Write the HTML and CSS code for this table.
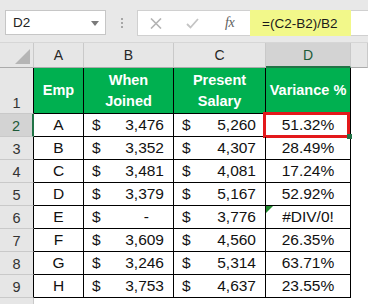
FILE: index.html
```html
<!DOCTYPE html>
<html>
<head>
<meta charset="utf-8">
<link rel="stylesheet" href="styles.css">
</head>
<body>
<div class="app">
  <div class="fbar">
    <div class="namebox">
      <span class="ref">D2</span>
      <svg class="caret" width="8" height="5" viewBox="0 0 8 5"><path d="M0 0H8L4 5Z" fill="#7a7a7a"/></svg>
    </div>
    <div class="dots"><i></i><i></i><i></i></div>
    <div class="formula">
      <svg class="icon" width="12" height="11" viewBox="0 0 12 11"><path d="M1 0.5L11 10.5M11 0.5L1 10.5" stroke="#b3b3b3" stroke-width="1.6" fill="none"/></svg>
      <svg class="icon check" width="13" height="11" viewBox="0 0 13 11"><path d="M1 6L4.5 9.5L12 1" stroke="#c4c4c4" stroke-width="1.8" fill="none"/></svg>
      <span class="fx">fx</span>
      <div class="ftext">=(C2-B2)/B2</div>
    </div>
  </div>
  <div class="sheet">
    <div class="ch corner"><span class="tri"></span></div>
    <div class="ch">A</div>
    <div class="ch">B</div>
    <div class="ch">C</div>
    <div class="ch sel">D</div>
    <div class="ch"></div>

    <div class="rh">1</div>
    <div class="hd">Emp</div>
    <div class="hd">When<br>Joined</div>
    <div class="hd">Present<br>Salary</div>
    <div class="hd">Variance %</div>
    <div class="blank"></div>

    <div class="rh rsel">2</div>
    <div class="c ctr">A</div>
    <div class="c money"><span>$</span><span>3,476</span></div>
    <div class="c money"><span>$</span><span>5,260</span></div>
    <div class="c ctr active">51.32%<span class="handle"></span></div>
    <div class="blank"></div>

    <div class="rh">3</div>
    <div class="c ctr">B</div>
    <div class="c money"><span>$</span><span>3,352</span></div>
    <div class="c money"><span>$</span><span>4,307</span></div>
    <div class="c ctr">28.49%</div>
    <div class="blank"></div>

    <div class="rh">4</div>
    <div class="c ctr">C</div>
    <div class="c money"><span>$</span><span>3,481</span></div>
    <div class="c money"><span>$</span><span>4,081</span></div>
    <div class="c ctr">17.24%</div>
    <div class="blank"></div>

    <div class="rh">5</div>
    <div class="c ctr">D</div>
    <div class="c money"><span>$</span><span>3,379</span></div>
    <div class="c money"><span>$</span><span>5,167</span></div>
    <div class="c ctr">52.92%</div>
    <div class="blank"></div>

    <div class="rh">6</div>
    <div class="c ctr">E</div>
    <div class="c money"><span>$</span><span class="dash">-</span></div>
    <div class="c money"><span>$</span><span>3,776</span></div>
    <div class="c ctr err">#DIV/0!</div>
    <div class="blank"></div>

    <div class="rh">7</div>
    <div class="c ctr">F</div>
    <div class="c money"><span>$</span><span>3,609</span></div>
    <div class="c money"><span>$</span><span>4,560</span></div>
    <div class="c ctr">26.35%</div>
    <div class="blank"></div>

    <div class="rh">8</div>
    <div class="c ctr">G</div>
    <div class="c money"><span>$</span><span>3,246</span></div>
    <div class="c money"><span>$</span><span>5,314</span></div>
    <div class="c ctr">63.71%</div>
    <div class="blank"></div>

    <div class="rh">9</div>
    <div class="c ctr">H</div>
    <div class="c money"><span>$</span><span>3,753</span></div>
    <div class="c money"><span>$</span><span>4,637</span></div>
    <div class="c ctr">23.55%</div>
    <div class="blank"></div>

    <div class="rh last">10</div>
    <div class="blank"></div>
    <div class="blank"></div>
    <div class="blank"></div>
    <div class="blank"></div>
    <div class="blank"></div>
  </div>
</div>
</body>
</html>
```
FILE: styles.css
```css
* { box-sizing: border-box; }
html, body { margin: 0; padding: 0; }
body {
  width: 368px;
  height: 304px;
  overflow: hidden;
  background: #ffffff;
  font-family: "Liberation Sans", Arial, sans-serif;
}
.app { width: 368px; height: 304px; overflow: hidden; }

.fbar {
  height: 43px;
  background: #e8e8e8;
  border-bottom: 1px solid #d6d6d6;
  display: flex;
  align-items: flex-start;
  padding-top: 10px;
  padding-left: 5px;
}
.namebox {
  width: 101px;
  height: 25px;
  background: #fff;
  border: 1px solid #c6c6c6;
  display: flex;
  align-items: center;
  justify-content: space-between;
  padding: 0 6px 0 7px;
}
.ref { font-size: 13.5px; color: #222; }
.caret { margin-top: 1px; }
.dots {
  width: 31px;
  height: 25px;
  display: flex;
  flex-direction: column;
  align-items: center;
  justify-content: center;
  gap: 2px;
}
.dots i { display: block; width: 2px; height: 2px; background: #a6a6a6; }
.formula {
  flex: 1;
  height: 26px;
  background: #fff;
  border: 1px solid #d0d0d0;
  border-right: none;
  display: flex;
  align-items: center;
  padding-left: 12px;
}
.icon { display: block; flex: none; }
.check { margin-left: 24px; }
.fx {
  margin-left: 26px;
  font-family: "Liberation Serif", serif;
  font-style: italic;
  font-size: 14px;
  color: #5e5e5e;
  letter-spacing: -0.5px;
}
.ftext {
  margin-left: 16px;
  width: 101px;
  height: 26px;
  background: #f2f88a;
  font-size: 13.5px;
  color: #1a1a1a;
  display: flex;
  align-items: center;
  padding-left: 12px;
}

.sheet {
  display: grid;
  grid-template-columns: 34px 50px 90px 92px 85px 1fr;
  grid-template-rows: 25px 46px repeat(8, 23px) 23px;
}
.ch {
  background: #e6e6e6;
  border-right: 1px solid #c9c9c9;
  border-bottom: 1px solid #ababab;
  display: flex;
  align-items: center;
  justify-content: center;
  font-size: 14px;
  color: #262626;
}
.ch.sel {
  background: #d3d3d3;
  border-bottom: 2px solid #217346;
  color: #1d5a38;
}
.corner { position: relative; }
.tri {
  position: absolute;
  right: 3px;
  bottom: 3px;
  width: 0;
  height: 0;
  border-left: 15px solid transparent;
  border-bottom: 15px solid #b5b5b5;
}
.rh {
  background: #e6e6e6;
  border-right: 1px solid #000;
  border-bottom: 1px solid #c9c9c9;
  display: flex;
  align-items: flex-end;
  justify-content: center;
  padding-bottom: 2px;
  font-size: 14.5px;
  color: #333;
}
.rh.rsel {
  background: #d3d3d3;
  border-right: 2px solid #217346;
  color: #1d5a38;
}
.rh.last {
  border-right: 1px solid #c9c9c9;
  align-items: flex-start;
  padding-top: 4px;
}
.hd {
  background: #00b050;
  border-right: 1px solid #000;
  border-bottom: 1px solid #000;
  color: #fff;
  font-weight: bold;
  font-size: 14.5px;
  line-height: 21px;
  text-align: center;
  display: flex;
  align-items: center;
  justify-content: center;
}
.blank { background: #fff; }
.c {
  border-right: 1px solid #000;
  border-bottom: 1px solid #000;
  font-size: 15.5px;
  color: #111;
  display: flex;
  align-items: center;
  position: relative;
}
.ctr { justify-content: center; }
.money { justify-content: space-between; padding: 0 9px 0 8px; }
.dash { margin-right: 15px; }
.active::after {
  content: "";
  position: absolute;
  left: -3px;
  top: -2px;
  right: 0;
  bottom: -2px;
  border: 3px solid #e3181b;
}
.handle {
  position: absolute;
  right: -2px;
  bottom: -3px;
  width: 5px;
  height: 5px;
  background: #217346;
  z-index: 2;
}
.err::before {
  content: "";
  position: absolute;
  left: 0;
  top: 0;
  width: 0;
  height: 0;
  border-top: 7px solid #1f8a2e;
  border-right: 7px solid transparent;
}
```
